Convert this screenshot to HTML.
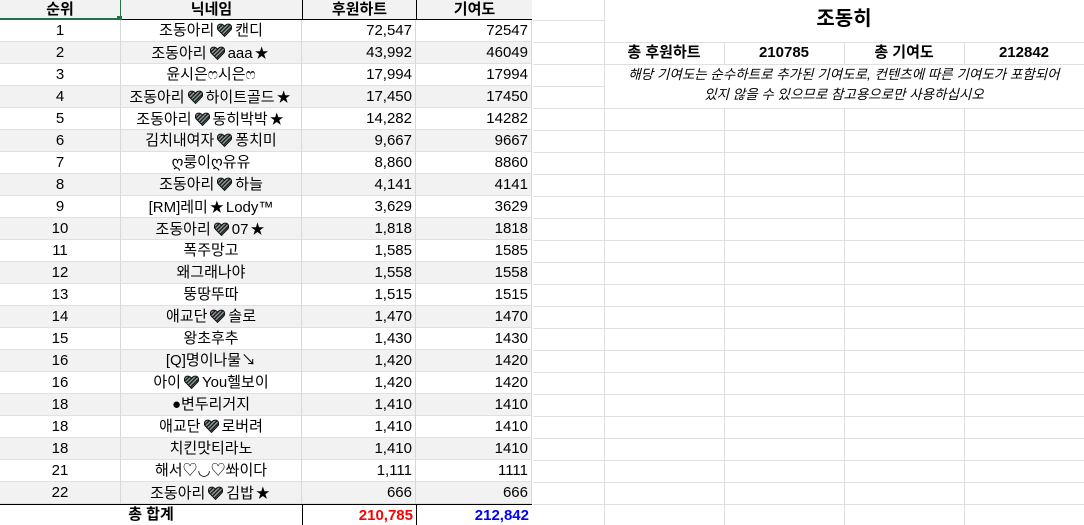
<!DOCTYPE html><html><head><meta charset="utf-8"><style>
html,body{margin:0;width:1084px;height:525px;overflow:hidden}
body{background:#fff;font-family:"Liberation Sans","Noto Sans CJK KR",sans-serif;font-size:15px;color:#000;position:relative}
.c{position:absolute;box-sizing:border-box;height:22px;line-height:22px;white-space:nowrap;overflow:visible}
.h{display:inline-block;width:15px;height:14px;vertical-align:-2px;margin:0 3px}
.s{font-size:14px;margin:0 2px}
</style></head><body>
<svg width="0" height="0" style="position:absolute"><defs>
<pattern id="st" width="2.6" height="2.6" patternUnits="userSpaceOnUse" patternTransform="rotate(45)"><rect width="2.6" height="2.6" fill="#222"/><rect width="1.1" height="2.6" fill="#9aa"/></pattern>
<symbol id="hr" viewBox="0 0 14 13"><path d="M7 12.5 L1.2 6.5 C-0.5 4.5 0.5 1 3.5 1 C5.2 1 6.3 2 7 3 C7.7 2 8.8 1 10.5 1 C13.5 1 14.5 4.5 12.8 6.5 Z" fill="url(#st)" stroke="#111" stroke-width="1"/></symbol>
</defs></svg>
<div id="g"></div>
<script>
const H='<svg class="h"><use href="#hr"/></svg>',S='<span class="s">★</span>';
const rows=[
["1","조동아리"+H+"캔디","72,547","72547"],
["2","조동아리"+H+"aaa"+S,"43,992","46049"],
["3","윤시은ෆ시은ෆ","17,994","17994"],
["4","조동아리"+H+"하이트골드"+S,"17,450","17450"],
["5","조동아리"+H+"동히박박"+S,"14,282","14282"],
["6","김치내여자"+H+"퐁치미","9,667","9667"],
["7","ღ룽이ღ유유","8,860","8860"],
["8","조동아리"+H+"하늘","4,141","4141"],
["9","[RM]레미"+S+"Lody™","3,629","3629"],
["10","조동아리"+H+"07"+S,"1,818","1818"],
["11","폭주망고","1,585","1585"],
["12","왜그래나야","1,558","1558"],
["13","뚱땅뚜따","1,515","1515"],
["14","애교단"+H+"솔로","1,470","1470"],
["15","왕초후추","1,430","1430"],
["16","[Q]명이나물↘","1,420","1420"],
["16","아이"+H+"You헬보이","1,420","1420"],
["18","●변두리거지","1,410","1410"],
["18","애교단"+H+"로버려","1,410","1410"],
["18","치킨맛티라노","1,410","1410"],
["21","해서♡◡♡쏴이다","1,111","1111"],
["22","조동아리"+H+"김밥"+S,"666","666"]];
let o='';
o+='<div class="c" style="left:0;top:0;width:532px;height:20px;background:#f2f2f2;border-bottom:1px solid #000"></div>';
[[0,120,"순위"],[120,302,"닉네임"],[302,416,"후원하트"],[416,532,"기여도"]].forEach((c,i)=>{o+=`<div class="c" style="left:${c[0]}px;top:0;width:${c[1]-c[0]}px;height:20px;line-height:19px;text-align:center;font-weight:bold;${i>0?'border-left:1px solid '+(i==1?'#217346':'#000')+';':''}">${c[2]}</div>`});
o+='<div style="position:absolute;left:0;top:18px;width:120px;height:2px;background:#217346"></div><div style="position:absolute;left:117px;top:16px;width:5px;height:5px;background:#217346"></div>';
rows.forEach((r,i)=>{const t=20+i*22,bg=i%2?'#f2f2f2':'#fff';
o+=`<div class="c" style="left:0;top:${t}px;width:532px;background:${bg};border-bottom:1px solid #e0e0e0"></div>`;
o+=`<div class="c" style="left:0;top:${t}px;width:120px;text-align:center">${r[0]}</div>`;
o+=`<div class="c" style="left:120px;top:${t}px;width:182px;text-align:center;border-left:1px solid #d8d8d8;border-right:1px solid #d8d8d8">${r[1]}</div>`;
o+=`<div class="c" style="left:302px;top:${t}px;width:114px;text-align:right;padding-right:3px;border-right:1px solid #d8d8d8">${r[2]}</div>`;
o+=`<div class="c" style="left:416px;top:${t}px;width:116px;text-align:right;padding-right:3px;border-right:1px solid #d8d8d8">${r[3]}</div>`;});
o+='<div class="c" style="left:0;top:504px;width:532px;height:21px;border-top:1px solid #000"></div>';
o+='<div class="c" style="left:0;top:504px;width:302px;height:21px;text-align:center;font-weight:bold">총 합계</div>';
o+='<div class="c" style="left:302px;top:504px;width:114px;height:21px;text-align:right;padding-right:3px;font-weight:bold;color:#f00;border-left:1px solid #000;border-top:1px solid #000">210,785</div>';
o+='<div class="c" style="left:416px;top:504px;width:116px;height:21px;text-align:right;padding-right:3px;font-weight:bold;color:#00f;border-left:1px solid #000;border-top:1px solid #000">212,842</div>';
for(let i=0;i<23;i++){o+=`<div style="position:absolute;left:533px;top:${20+i*22}px;width:71px;height:1px;background:#e0e0e0"></div>`}
[604,724,844,964].forEach(x=>{o+=`<div style="position:absolute;left:${x}px;top:${x==604?0:108}px;width:1px;height:${x==604?525:417}px;background:#e0e0e0"></div>`});
[724,844,964].forEach(x=>{o+=`<div style="position:absolute;left:${x}px;top:42px;width:1px;height:22px;background:#e0e0e0"></div>`});
[42,64,108,130,152,174,196,218,240,262,284,306,328,350,372,394,416,438,460,482,504].forEach(y=>{o+=`<div style="position:absolute;left:604px;top:${y}px;width:480px;height:1px;background:#e0e0e0"></div>`});
o+='<div class="c" style="left:604px;top:4px;width:480px;height:30px;text-align:center;font-size:20px;font-weight:bold;line-height:30px">조동히</div>';
[[604,"총 후원하트"],[724,"210785"],[844,"총 기여도"],[964,"212842"]].forEach(c=>{o+=`<div class="c" style="left:${c[0]}px;top:42px;width:120px;text-align:center;font-weight:bold;font-size:15px">${c[1]}</div>`});
o+='<div class="c" style="left:604px;top:65px;width:480px;height:42px;line-height:20px;text-align:center;font-style:italic;font-size:13.5px;white-space:normal">해당 기여도는 순수하트로 추가된 기여도로, 컨텐츠에 따른 기여도가 포함되어<br>있지 않을 수 있으므로 참고용으로만 사용하십시오</div>';
document.getElementById('g').innerHTML=o;
</script></body></html>
